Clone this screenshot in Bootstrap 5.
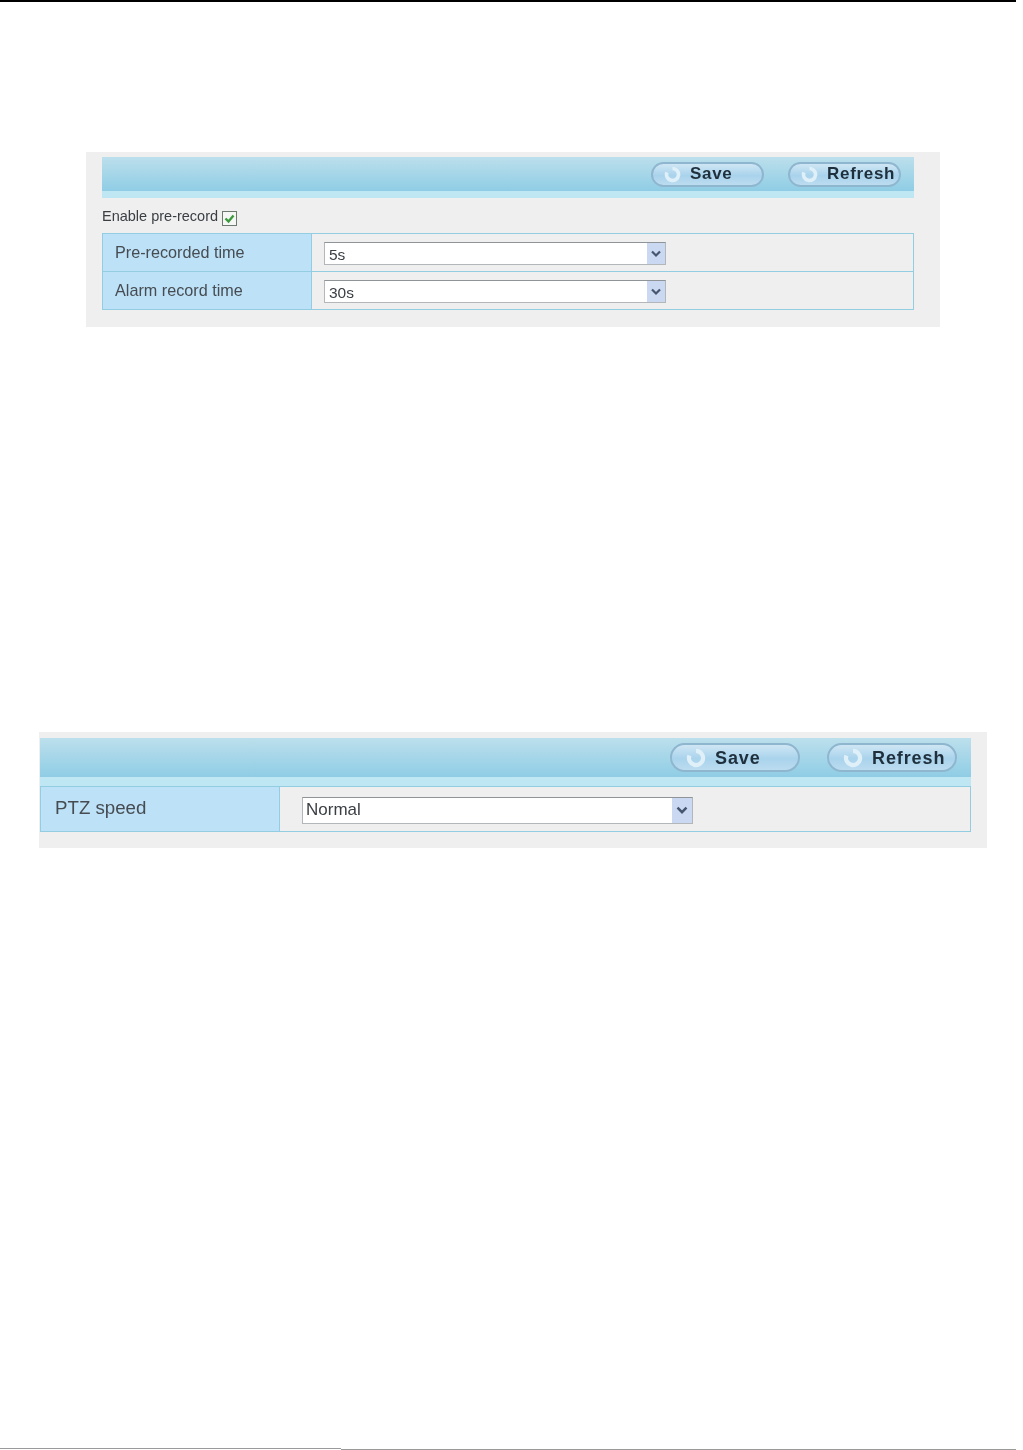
<!DOCTYPE html>
<html lang="en">
<head>
<meta charset="utf-8">
<title>Settings</title>
<link rel="stylesheet" href="https://cdn.jsdelivr.net/npm/bootstrap@5.3.0/dist/css/bootstrap.min.css">
<style>
html,body{background:#fff;font-family:"Liberation Sans",Arial,sans-serif;color:#464c52;}
.sheet{width:1016px;height:1450px;display:flex;flex-direction:column;}
.topline{height:2px;background:#000;flex:none;}
.botline{flex:none;display:flex;height:2px;}
.botline i{display:block;height:1px;background:#9a9a9a;}
.botline .seg1{width:341px;}
.botline .seg2{width:675px;margin-top:1px;}
.spacer{flex:1;}
.panel-a,.panel-b{filter:blur(.45px);flex:none;background:#efefef;}
.panel-a{margin:150px 76px 0 86px;height:175px;padding:5px 26px 0 16px;}
.panel-b{margin:405px 29px 0 39px;height:116px;padding:6px 16px 0 1px;}
.hdr{background:linear-gradient(#bcdfec,#8fcde5);display:flex;justify-content:flex-end;align-items:center;}
.panel-a .hdr{height:34px;padding-right:13px;gap:24px;}
.panel-b .hdr{height:39px;padding-right:14px;gap:27px;}
.under{background:#bfe6f3;}
.panel-a .under{height:7px;}
.panel-b .under{height:9px;}
.pill{border:2px solid #8fb6cf;border-radius:20px;background:linear-gradient(#cfe6f4,#a9d3ec 55%,#bcdcf0);display:flex;align-items:center;font-weight:700;color:#1f2f3c;padding:0;}
.panel-a .pill{height:25px;font-size:17px;letter-spacing:.7px;}
.panel-b .pill{height:29px;font-size:18px;letter-spacing:.9px;padding-top:1px;}
.panel-a .p-save,.panel-a .p-ref{width:113px;}
.panel-b .p-save,.panel-b .p-ref{width:130px;}
.pill svg{flex:none;}
.panel-a .pill svg{margin:0 9px 0 11px;}
.panel-b .pill svg{margin:0 9px 0 14px;}
.enable{font-size:14.5px;line-height:16px;height:35px;padding-top:10px;display:flex;gap:4px;color:#3a3f44;}
.chk{display:block;width:15px;height:15px;margin-top:3px;}
.grid-t{border:1px solid #93cde2;}
.rw{display:flex;}
.rw+.rw{border-top:1px solid #93cde2;}
.panel-a .rw{height:37px;}
.panel-a .rw+.rw{height:38px;}
.lab{background:#bde1f7;border-right:1px solid #93cde2;flex:none;display:flex;align-items:center;}
.panel-a .lab{width:209px;padding-left:12px;font-size:16.2px;}
.panel-b .rw{height:44px;}
.panel-b .lab{width:239px;padding-left:14px;font-size:18.7px;padding-bottom:1px;}
.val{flex:1;display:flex;align-items:center;}
.panel-a .val{padding-left:12px;}
.panel-b .val{padding-left:22px;}
.sel{background:#fff;border:1px solid #b3b7ba;border-top-color:#8f9498;display:flex;align-items:center;justify-content:space-between;color:#3a3f44;}
.panel-a .sel{width:342px;height:23px;font-size:15.5px;padding-left:4px;margin-top:2px;}
.panel-a .sel>span:first-child{padding-top:2px;}
.panel-b .sel{width:391px;height:27px;font-size:17px;padding-left:3px;margin-top:2px;}
.arrow{background:#cbd8f2;height:100%;display:flex;align-items:center;justify-content:center;flex:none;}
.panel-a .arrow{width:18px;}
.panel-b .arrow{width:20px;}
</style>
</head>
<body class="m-0">
<div class="sheet">
  <div class="topline"></div>

  <section class="panel-a">
    <div class="hdr">
      <button type="button" class="pill p-save"><svg width="17" height="17" viewBox="0 0 17 17"><path d="M8.5 2.5a6 6 0 1 1-5.6 3.9" fill="none" stroke="#dff0f9" stroke-width="3.6"/></svg>Save</button>
      <button type="button" class="pill p-ref"><svg width="17" height="17" viewBox="0 0 17 17"><path d="M8.5 2.5a6 6 0 1 1-5.6 3.9" fill="none" stroke="#dff0f9" stroke-width="3.6"/></svg>Refresh</button>
    </div>
    <div class="under"></div>
    <div class="enable"><span>Enable pre-record</span>
      <svg class="chk" viewBox="0 0 15 15"><rect x=".5" y=".5" width="14" height="14" fill="#f4f7f4" stroke="#6d7a70"/><path d="M3.5 7.5l3 3 5-6" fill="none" stroke="#3c9a3c" stroke-width="2.4"/></svg>
    </div>
    <div class="grid-t">
      <div class="rw"><div class="lab">Pre-recorded time</div><div class="val"><div class="sel"><span>5s</span><span class="arrow"><svg width="10" height="8" viewBox="0 0 10 8"><path d="M1 1.5l4 4 4-4" fill="none" stroke="#46566f" stroke-width="2.2"/></svg></span></div></div></div>
      <div class="rw"><div class="lab">Alarm record time</div><div class="val"><div class="sel"><span>30s</span><span class="arrow"><svg width="10" height="8" viewBox="0 0 10 8"><path d="M1 1.5l4 4 4-4" fill="none" stroke="#46566f" stroke-width="2.2"/></svg></span></div></div></div>
    </div>
  </section>

  <section class="panel-b">
    <div class="hdr">
      <button type="button" class="pill p-save"><svg width="20" height="20" viewBox="0 0 17 17"><path d="M8.5 2.5a6 6 0 1 1-5.6 3.9" fill="none" stroke="#dff0f9" stroke-width="3.6"/></svg>Save</button>
      <button type="button" class="pill p-ref"><svg width="20" height="20" viewBox="0 0 17 17"><path d="M8.5 2.5a6 6 0 1 1-5.6 3.9" fill="none" stroke="#dff0f9" stroke-width="3.6"/></svg>Refresh</button>
    </div>
    <div class="under"></div>
    <div class="grid-t">
      <div class="rw"><div class="lab">PTZ speed</div><div class="val"><div class="sel"><span>Normal</span><span class="arrow"><svg width="12" height="9" viewBox="0 0 10 8"><path d="M1 1.5l4 4 4-4" fill="none" stroke="#46566f" stroke-width="2.2"/></svg></span></div></div></div>
    </div>
  </section>

  <div class="spacer"></div>
  <div class="botline"><i class="seg1"></i><i class="seg2"></i></div>
</div>
</body>
</html>
